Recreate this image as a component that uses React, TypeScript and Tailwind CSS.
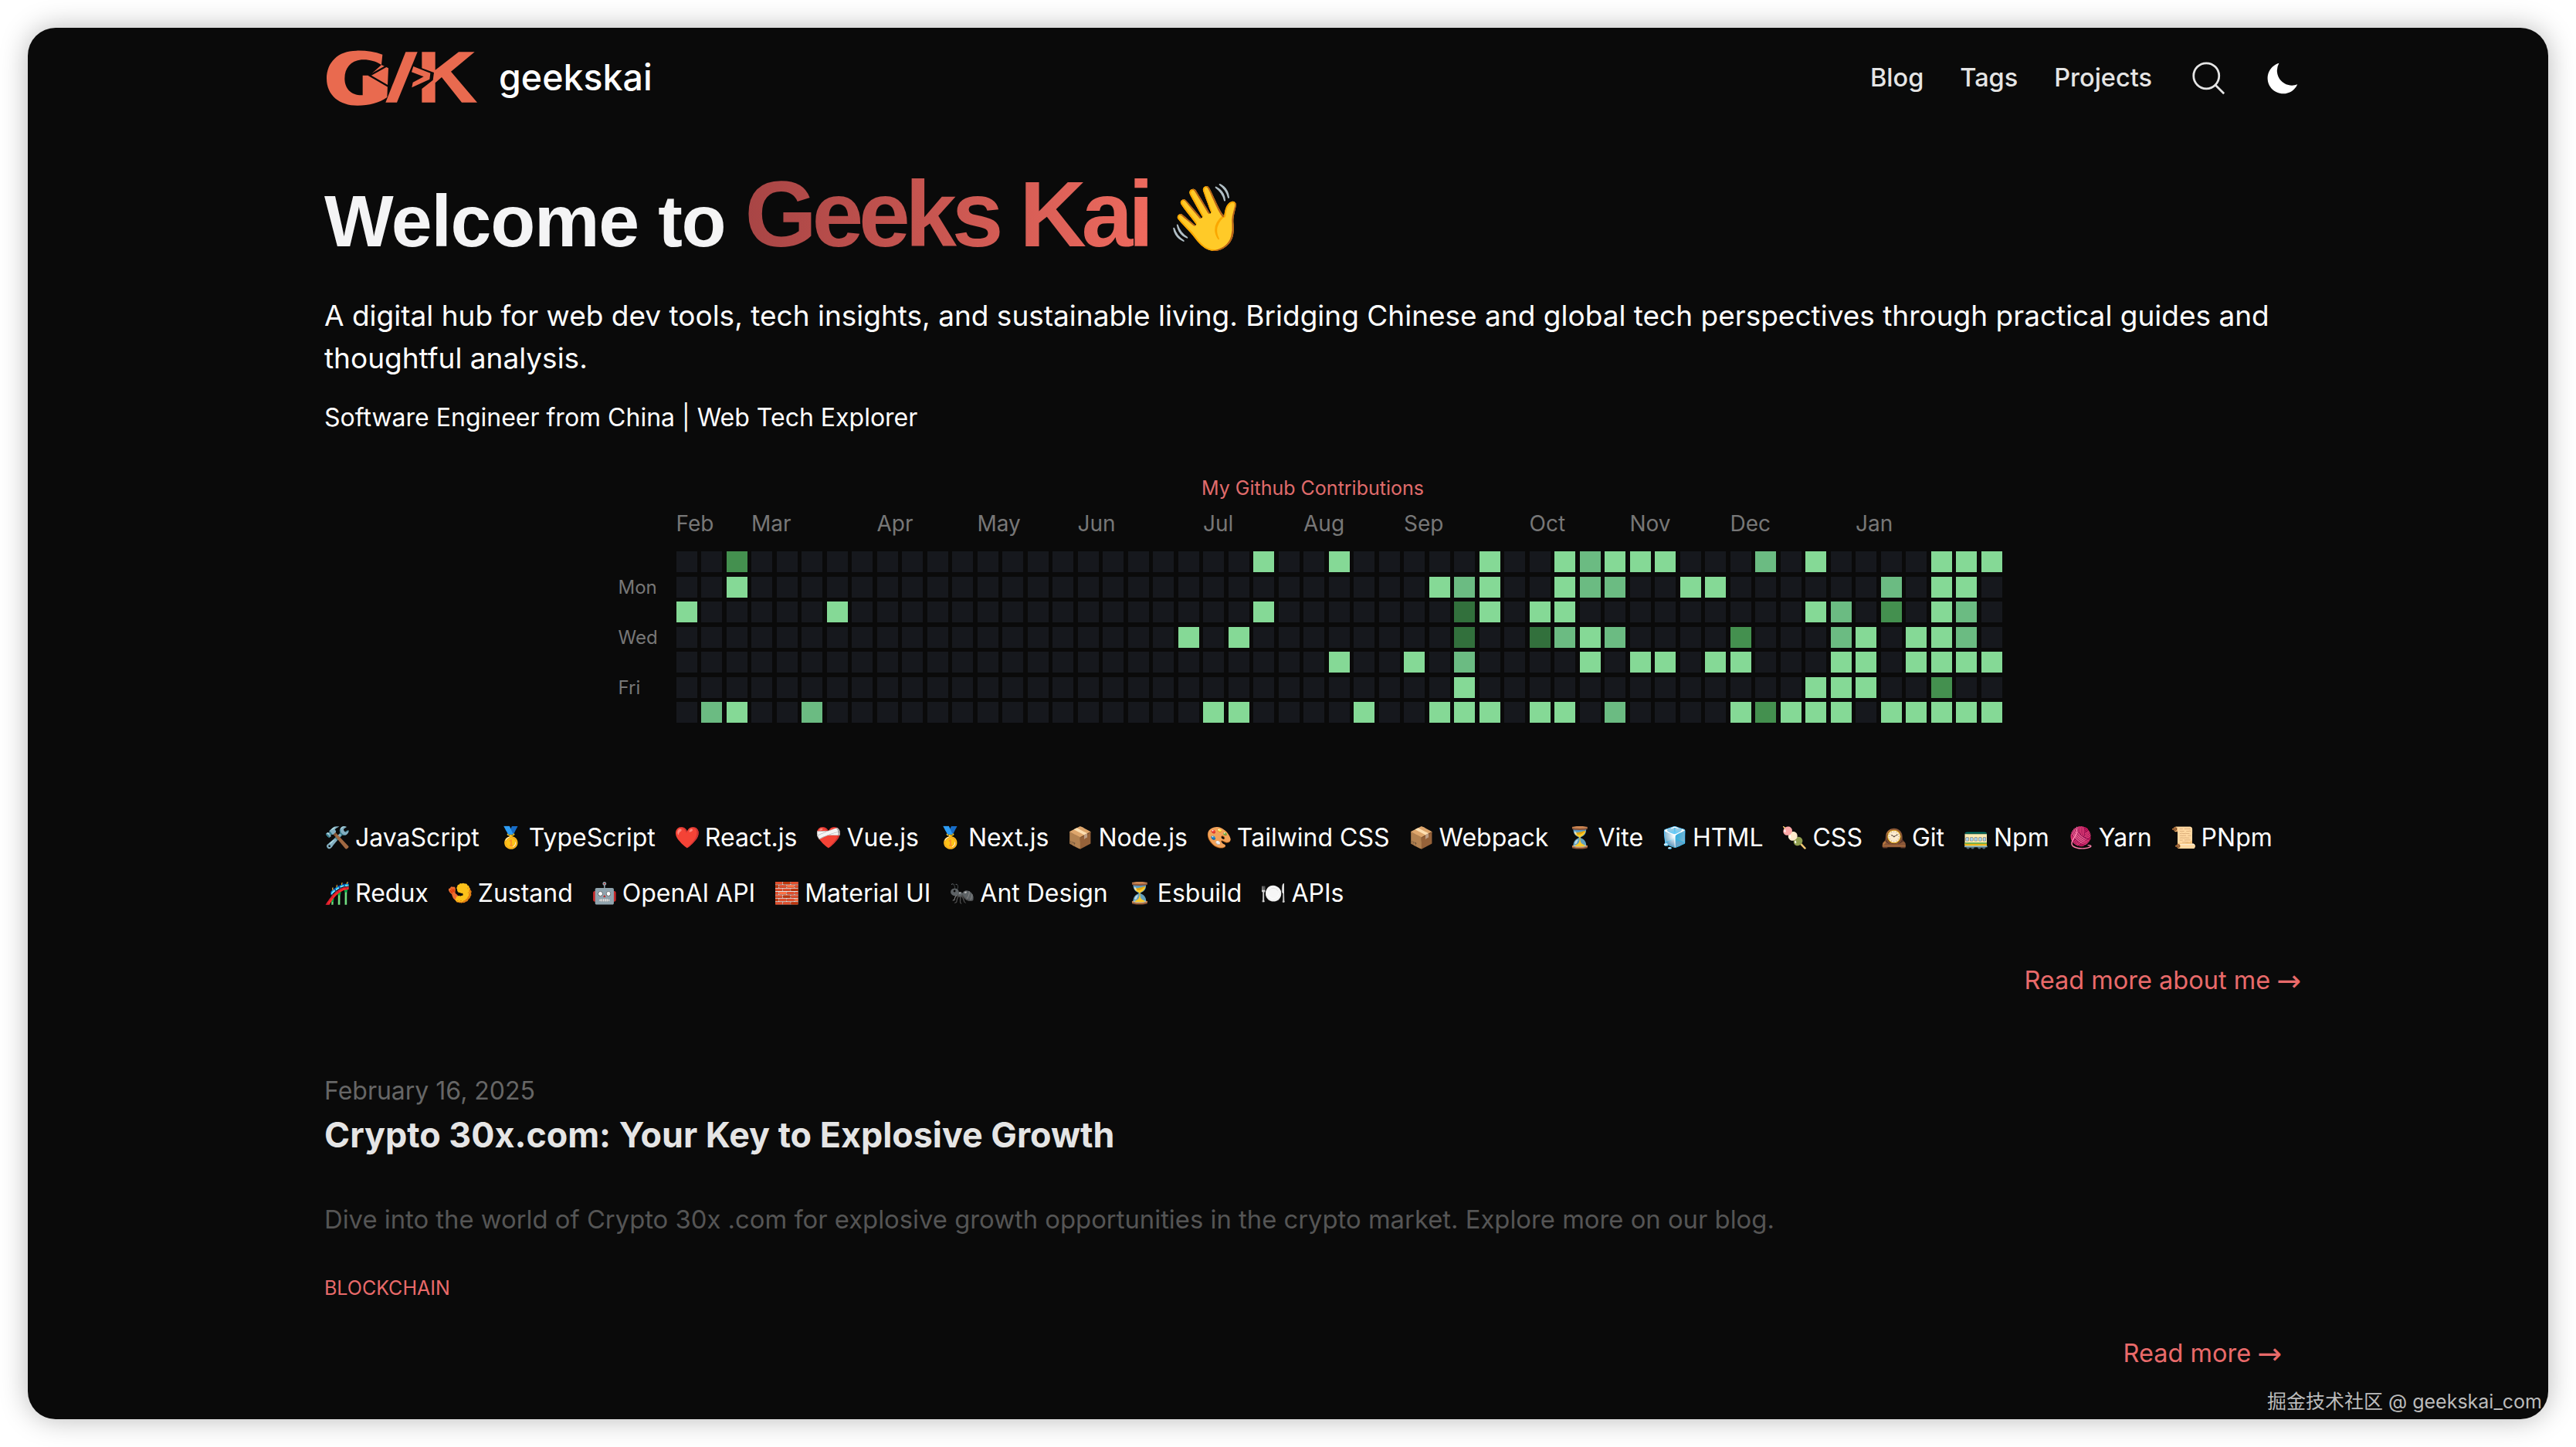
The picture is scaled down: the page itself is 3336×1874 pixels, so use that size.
import React from 'react';

const months = [
  { label: 'Feb', col: 0 },
  { label: 'Mar', col: 3 },
  { label: 'Apr', col: 8 },
  { label: 'May', col: 12 },
  { label: 'Jun', col: 16 },
  { label: 'Jul', col: 21 },
  { label: 'Aug', col: 25 },
  { label: 'Sep', col: 29 },
  { label: 'Oct', col: 34 },
  { label: 'Nov', col: 38 },
  { label: 'Dec', col: 42 },
  { label: 'Jan', col: 47 },
];

// l = light, m = medium, d = dark, x = darkest
const contributions: Record<string, string>[] = [
  { 2: 'd', 23: 'l', 26: 'l', 32: 'l', 35: 'l', 36: 'm', 37: 'l', 38: 'l', 39: 'l', 43: 'm', 45: 'l', 50: 'l', 51: 'l', 52: 'l' },
  { 2: 'l', 30: 'l', 31: 'm', 32: 'l', 35: 'l', 36: 'm', 37: 'm', 40: 'l', 41: 'l', 48: 'm', 50: 'l', 51: 'l' },
  { 0: 'l', 6: 'l', 23: 'l', 31: 'x', 32: 'l', 34: 'l', 35: 'l', 45: 'l', 46: 'm', 48: 'd', 50: 'l', 51: 'm' },
  { 20: 'l', 22: 'l', 31: 'x', 34: 'x', 35: 'm', 36: 'l', 37: 'm', 42: 'd', 46: 'm', 47: 'l', 49: 'l', 50: 'l', 51: 'm' },
  { 26: 'l', 29: 'l', 31: 'm', 36: 'l', 38: 'l', 39: 'l', 41: 'l', 42: 'l', 46: 'l', 47: 'l', 49: 'l', 50: 'l', 51: 'l', 52: 'l' },
  { 31: 'l', 45: 'l', 46: 'l', 47: 'l', 50: 'd' },
  { 1: 'm', 2: 'l', 5: 'm', 21: 'l', 22: 'l', 27: 'l', 30: 'l', 31: 'l', 32: 'l', 34: 'l', 35: 'l', 37: 'm', 42: 'l', 43: 'd', 44: 'l', 45: 'l', 46: 'l', 48: 'l', 49: 'l', 50: 'l', 51: 'l', 52: 'l' },
];

const cellColors: Record<string, string> = {
  l: 'bg-[#85d996]',
  m: 'bg-[#6bbb82]',
  d: 'bg-[#44904f]',
  x: 'bg-[#32703c]',
};

const skills = [
  ['🛠️', 'JavaScript'], ['🥇', 'TypeScript'], ['❤️', 'React.js'], ['❤️‍🩹', 'Vue.js'], ['🥇', 'Next.js'], ['📦', 'Node.js'],
  ['🎨', 'Tailwind CSS'], ['📦', 'Webpack'], ['⏳', 'Vite'], ['🧊', 'HTML'], ['🍡', 'CSS'], ['🕰️', 'Git'], ['🚃', 'Npm'], ['🧶', 'Yarn'], ['📜', 'PNpm'],
  ['🎢', 'Redux'], ['🍤', 'Zustand'], ['🤖', 'OpenAI API'], ['🧱', 'Material UI'], ['🐜', 'Ant Design'], ['⏳', 'Esbuild'], ['🍽️', 'APIs'],
];

const Logo = () => (
  <svg viewBox="0 0 618 246" className="-ml-[2px] h-[82px] w-[206px] shrink-0" fill="#e96a4f">
    {/* G */}
    <path d="M232 32 C200 20 165 16 130 17 C60 17 15 62 15 125 C15 190 65 230 135 230 C180 230 220 220 250 198 L255 85 L228 72 Z" />
    <path d="M228 72 C205 56 175 50 150 52 C108 56 85 85 85 125 C85 165 112 192 155 190 L155 113 L182 113 Z" fill="#0a0a0a" />
    <path d="M256 72 L182 113 L262 160" fill="none" stroke="#0a0a0a" strokeWidth="7" />
    {/* slash */}
    <path d="M322 22 L368 22 L288 218 L244 218 Z" />
    {/* chevron */}
    <path d="M352 78 L418 104 L415 128 L346 160 L350 140 L392 118 L345 100 Z" />
    {/* K */}
    <path d="M385 22 L437 22 L437 92 L528 22 L590 22 L498 98 L600 218 L540 218 L462 120 L437 142 L437 218 L385 218 L385 165 L428 131 L432 102 L385 85 Z" />
  </svg>
);

const App = () => {
  return (
    <div className="relative min-h-screen bg-white p-9 [font-family:Inter,'Noto_Sans_CJK_SC',sans-serif]">
      <div className="h-[1802px] overflow-hidden rounded-[36px] bg-[#0a0a0a] shadow-[0_0_36px_rgba(0,0,0,0.28)]">
        <div className="ml-[384px] w-[2560px] pt-[24px]">
          <header className="flex h-[82px] items-center justify-between pr-[2px]">
            <div className="flex items-center gap-[22px]">
              <Logo />
              <span className="text-[46.5px] font-medium text-white">geekskai</span>
            </div>
            <nav className="flex items-center text-[32.5px] font-medium text-[#e5e5e5]">
              <span>Blog</span>
              <span className="ml-[47px]">Tags</span>
              <span className="ml-[47px]">Projects</span>
              <svg viewBox="0 0 24 24" className="ml-[51px] h-[44px] w-[44px]" fill="none" stroke="#e5e5e5" strokeWidth="1.5">
                <circle cx="10.5" cy="10.5" r="9" />
                <path d="M17 17l6 6" />
              </svg>
              <svg viewBox="0 0 24 24" className="ml-[52px] h-[44px] w-[44px]" fill="#fff">
                <path d="M9.5 1.5A11 11 0 1 0 22.5 16.5 10.5 10.5 0 0 1 9.5 1.5Z" />
              </svg>
            </nav>
          </header>

          <section className="pt-[75px]">
            <h1 className="flex items-baseline text-[95px] font-bold leading-[120px] tracking-[-1.2px] text-[#f4f4f5] [font-family:'Liberation_Sans',sans-serif]">
              Welcome to
              <span className="ml-[25px] bg-gradient-to-r from-[#a84545] to-[#ee6a5e] bg-clip-text text-[120px] tracking-[-6.3px] text-transparent">Geeks Kai</span>
              <span className="relative -top-[8px] ml-[22px] text-[84px] tracking-normal">👋</span>
            </h1>
            <p className="mt-[31px] text-[37px] leading-[55px] text-white">
              A digital hub for web dev tools, tech insights, and sustainable living. Bridging Chinese and global tech perspectives through practical guides and thoughtful analysis.
            </p>
            <p className="mt-[25px] text-[32px] leading-[50px] text-white">Software Engineer from China | Web Tech Explorer</p>
          </section>

          <section className="mt-[51px] flex flex-col items-center">
            <h2 className="text-[25px] leading-[30px] text-[#e06c6c]">My Github Contributions</h2>
            <div className="mr-[7px] flex gap-[22px]">
              <div className="mt-[65px] flex w-[53px] flex-col text-[24px] text-[#777]">
                {['', 'Mon', '', 'Wed', '', 'Fri', ''].map((d, i) => (
                  <div key={i} className="flex h-[32.5px] items-center">{d}</div>
                ))}
              </div>
              <div>
                <div className="relative h-[67px] text-[28px] text-[#777]">
                  {months.map((m) => (
                    <span key={m.label} className="absolute top-[10px]" style={{ left: m.col * 32.5 }}>{m.label}</span>
                  ))}
                </div>
                <div className="flex flex-col gap-[5.5px]">
                  {contributions.map((row, r) => (
                    <div key={r} className="flex gap-[5.5px]">
                      {Array.from({ length: 53 }, (_, c) => (
                        <div key={c} className={`h-[27px] w-[27px] ${cellColors[row[c]] ?? 'bg-[#16181d]'}`} />
                      ))}
                    </div>
                  ))}
                </div>
              </div>
            </div>
          </section>

          <section className="mt-[120px] flex flex-wrap gap-x-[24px] gap-y-[22px] text-[32px] leading-[50px] text-white">
            {skills.map(([icon, name]) => (
              <span key={name} className="flex items-center">
                <span className="w-[40px] text-[27px]">{icon}</span>
                {name}
              </span>
            ))}
          </section>

          <div className="mt-[63px] flex items-center justify-end text-[32.5px] leading-[50px] text-[#e96a6a]">
            Read more about me <span className="ml-[8px] text-[38px] [font-family:'DejaVu_Sans',sans-serif]">→</span>
          </div>

          <article className="mt-[93px]">
            <div className="text-[32px] leading-[50px] text-[#666]">February 16, 2025</div>
            <h2 className="text-[44.8px] font-bold leading-[64px] text-[#e5e5e5]">Crypto 30x.com: Your Key to Explosive Growth</h2>
            <p className="mt-[52px] text-[32.8px] leading-[50px] text-[#555]">Dive into the world of Crypto 30x .com for explosive growth opportunities in the crypto market. Explore more on our blog.</p>
            <div className="mt-[44px] text-[25px] leading-[40px] text-[#e96a6a]">BLOCKCHAIN</div>
            <div className="mt-[40px] flex items-center justify-end pr-[25px] text-[32.5px] leading-[50px] text-[#e96a6a]">
              Read more <span className="ml-[8px] text-[38px] [font-family:'DejaVu_Sans',sans-serif]">→</span>
            </div>
          </article>
        </div>
      </div>
      <div className="absolute right-[44px] top-[1797px] text-[25px] text-[#bbb]">掘金技术社区 @ geekskai_com</div>
    </div>
  );
};

export default App;
